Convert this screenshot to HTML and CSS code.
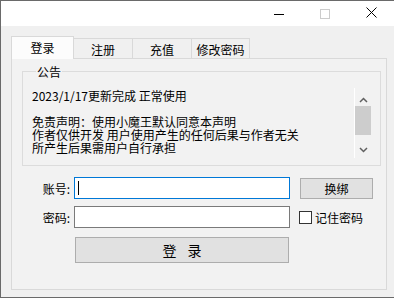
FILE: index.html
```html
<!DOCTYPE html>
<html lang="zh-CN">
<head>
    <meta charset="UTF-8">
    <title>登录</title>
    <link rel="stylesheet" href="styles.css">
</head>
<body>
<div class="window">
    <!-- Barra de título -->
    <div class="titlebar">
        <div class="ctrl">
            <svg width="10" height="10" viewBox="0 0 10 10"><path d="M0 5.5H10" stroke="#000" stroke-width="1"/></svg>
        </div>
        <div class="ctrl">
            <svg width="10" height="10" viewBox="0 0 10 10"><rect x="0.5" y="0.5" width="9" height="9" fill="none" stroke="#cccccc"/></svg>
        </div>
        <div class="ctrl">
            <svg width="11" height="11" viewBox="0 0 11 11"><path d="M0.5 0.5L10.5 10.5M10.5 0.5L0.5 10.5" stroke="#000" stroke-width="1"/></svg>
        </div>
    </div>

    <div class="content">
        <!-- Pestañas -->
        <div class="tabs">
            <div class="tab active">登录</div>
            <div class="tab">注册</div>
            <div class="tab">充值</div>
            <div class="tab">修改密码</div>
        </div>

        <div class="panel">
            <fieldset class="group">
                <legend>公告</legend>
                <div class="notice">
                    <div class="notice-text">
                        <div>2023/1/17更新完成 正常使用</div>
                        <div>&nbsp;</div>
                        <div>免责声明：使用小魔王默认同意本声明</div>
                        <div>作者仅供开发 用户使用产生的任何后果与作者无关</div>
                        <div>所产生后果需用户自行承担</div>
                    </div>
                    <div class="scrollbar">
                        <svg class="arrow" width="9" height="6" viewBox="0 0 9 6"><path d="M1 5L4.5 1.5L8 5" fill="none" stroke="#606060" stroke-width="1.5"/></svg>
                        <div class="thumb"></div>
                        <svg class="arrow" width="9" height="6" viewBox="0 0 9 6"><path d="M1 1L4.5 4.5L8 1" fill="none" stroke="#606060" stroke-width="1.5"/></svg>
                    </div>
                </div>
            </fieldset>

            <div class="form">
                <div class="row">
                    <span class="label">账号:</span>
                    <div class="field focus"><span class="caret"></span></div>
                    <div class="btn small">换绑</div>
                </div>
                <div class="row">
                    <span class="label">密码:</span>
                    <div class="field"></div>
                    <label class="remember"><span class="checkbox"></span>记住密码</label>
                </div>
                <div class="row">
                    <div class="btn login">登 录</div>
                </div>
            </div>
        </div>
    </div>
</div>
</body>
</html>
```

FILE: styles.css
```css
body {
    margin: 0;
    background: #f0f0f0;
    font-family: "Noto Sans CJK SC", "Microsoft YaHei", sans-serif;
    font-size: 12px;
    color: #000;
}

.window {
    width: 393px;
    height: 296px;
    border-left: 1px solid #6a6a6a;
    border-top: 1px solid #6a6a6a;
    border-bottom: 1px solid #6a6a6a;
    background: #f0f0f0;
    display: flex;
    flex-direction: column;
    overflow: hidden;
}

/* Barra de título */
.titlebar {
    height: 25px;
    background: #fff;
    display: flex;
    justify-content: flex-end;
    align-items: flex-start;
}

.ctrl {
    width: 46px;
    height: 25px;
    display: flex;
    justify-content: center;
    align-items: center;
}

.ctrl:last-child svg { margin-top: -2px; }

.content {
    padding: 10px 0 0 10px;
}

/* Pestañas */
.tabs {
    display: flex;
    align-items: flex-end;
    height: 22px;
    position: relative;
    z-index: 1;
}

.tab {
    box-sizing: border-box;
    height: 20px;
    width: 60px;
    margin-left: -1px;
    border: 1px solid #d9d9d9;
    border-bottom: none;
    background: #f0f0f0;
    display: flex;
    justify-content: center;
    align-items: center;
    padding-top: 1px;
}

.tab:nth-child(4) { width: 59px; }

.tab.active {
    width: 63px;
    height: 23px;
    margin-left: 0;
    margin-bottom: -1px;
    background: #fcfcfc;
    padding-top: 0;
    padding-bottom: 2px;
    z-index: 2;
}

.panel {
    box-sizing: border-box;
    width: 376px;
    height: 232px;
    border: 1px solid #d9d9d9;
    background: #f2f2f2;
    padding: 6px 5px 0 10px;
}

/* Cuadro de anuncio */
.group {
    margin: 0;
    width: 359px;
    box-sizing: border-box;
    border: 1px solid #dcdcdc;
    padding: 10px 9px 7px 9px;
}

.group legend {
    padding: 0 1px;
    margin-left: 4px;
    line-height: 13px;
}

.notice {
    display: flex;
    height: 70px;
}

.notice-text {
    flex: 1;
    line-height: 13px;
    padding-top: 1px;
    overflow: hidden;
    white-space: nowrap;
}

.scrollbar {
    width: 16px;
    border-left: 1px solid #fff;
    display: flex;
    flex-direction: column;
    align-items: center;
    padding-top: 9px;
}

.arrow { flex: none; }

.thumb {
    width: 16px;
    height: 29px;
    background: #cdcdcd;
    margin: 3px 0 12px;
}

/* Formulario */
.form {
    margin-top: 11px;
    display: flex;
    flex-direction: column;
    gap: 7px;
}

.row {
    display: flex;
    align-items: center;
    height: 22px;
}

.label {
    width: 48px;
    text-align: right;
    margin-right: 4px;
}

.field {
    box-sizing: border-box;
    width: 216px;
    height: 22px;
    background: #fff;
    border: 1px solid #7a7a7a;
    display: flex;
    align-items: center;
    padding-left: 3px;
}

.field.focus { border-color: #0078d7; }

.caret {
    width: 1px;
    height: 14px;
    background: #000;
}

.btn {
    box-sizing: border-box;
    background: #e1e1e1;
    border: 1px solid #adadad;
    display: flex;
    justify-content: center;
    align-items: center;
}

.btn.small {
    width: 73px;
    height: 21px;
    margin-left: 10px;
}

.remember {
    display: flex;
    align-items: center;
    margin-left: 9px;
    gap: 3px;
}

.checkbox {
    box-sizing: border-box;
    width: 13px;
    height: 13px;
    border: 1px solid #333;
    background: #fff;
}

.row:last-child {
    height: 26px;
    margin-top: 2px;
}

.btn.login {
    width: 214px;
    height: 26px;
    margin-left: 53px;
    font-size: 14px;
    letter-spacing: 4px;
    padding-left: 4px;
}
```
